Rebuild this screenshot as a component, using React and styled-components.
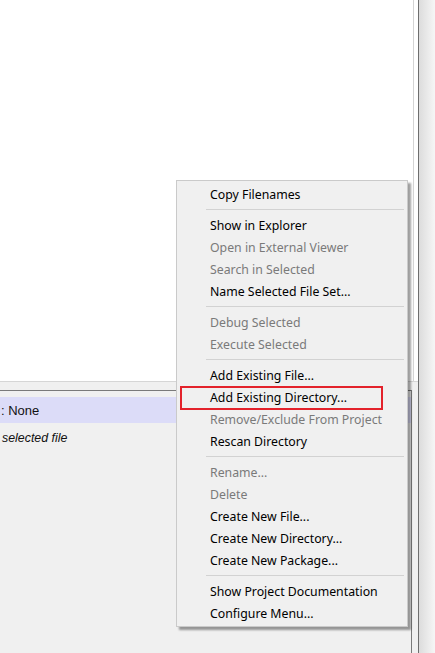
import React from 'react';
import styled, { createGlobalStyle } from 'styled-components';

const GlobalStyle = createGlobalStyle`
    html, body {
        margin: 0;
        padding: 0;
        width: 435px;
        height: 653px;
        overflow: hidden;
        background: #f0f0f0;
    }
    #root {
        height: 100%;
    }
`

const Window = styled.div`
    position: relative;
    display: flex;
    width: 435px;
    height: 653px;
    font-family: "Liberation Sans", Arial, sans-serif;
`

const LeftPane = styled.div`
    display: flex;
    flex-direction: column;
    width: 418px;
`

const TopView = styled.div`
    height: 381px;
    background: #fff;
    border-bottom: 1px solid #d6d6d6;
    display: flex;
`

const Canvas = styled.div`
    width: 413px;
    border-right: 1px solid #d4d4d4;
`

const BottomArea = styled.div`
    flex: 1;
    padding-top: 8px;
    display: flex;
`

const InfoPanel = styled.div`
    width: 411px;
    border-top: 1px solid #7a7a7a;
    border-right: 1px solid #7a7a7a;
    padding-top: 6px;
    background: #f0f0f0;
`

const StatusRow = styled.div`
    height: ${p => (p.$italic ? '30px' : '26px')};
    display: flex;
    align-items: center;
    padding-left: ${p => (p.$italic ? '2px' : '1px')};
    background: ${p => (p.$active ? '#dcdcf8' : 'transparent')};
    font-style: ${p => (p.$italic ? 'italic' : 'normal')};
    font-size: ${p => (p.$italic ? '12.4px' : '13px')};
    color: #111;
    white-space: nowrap;
`

const RightPane = styled.div`
    flex: 1;
    border-left: 1px solid #6e6e6e;
    background: linear-gradient(to right, #dcdcdc, #f6f6f6);
`

const Menu = styled.div`
    position: absolute;
    left: 176px;
    top: 180px;
    width: 230px;
    padding: 2px 0 2px;
    background: #f0f0f0;
    border: 1px solid #cacaca;
    box-shadow: 3px 3px 2px rgba(0, 0, 0, 0.38);
    font-family: "Noto Sans", "Open Sans", sans-serif;
    font-size: 12.3px;
`

const Item = styled.div`
    position: relative;
    height: 22px;
    display: flex;
    align-items: center;
    padding-left: 33px;
    color: ${p => (p.$disabled ? '#7a7a7a' : '#000')};
    white-space: nowrap;

    ${p => p.$marked && `
        &::after {
            content: '';
            position: absolute;
            left: 3px;
            top: 0;
            width: 199px;
            height: 20px;
            border: 2px solid #e3222b;
        }
    `}
`

const Separator = styled.div`
    height: 1px;
    margin: 4px 3px 4px 29px;
    background: #d2d2d2;
`

const groups = [
    [{ label: 'Copy Filenames' }],
    [
        { label: 'Show in Explorer' },
        { label: 'Open in External Viewer', disabled: true },
        { label: 'Search in Selected', disabled: true },
        { label: 'Name Selected File Set...' },
    ],
    [
        { label: 'Debug Selected', disabled: true },
        { label: 'Execute Selected', disabled: true },
    ],
    [
        { label: 'Add Existing File...' },
        { label: 'Add Existing Directory...', marked: true },
        { label: 'Remove/Exclude From Project', disabled: true },
        { label: 'Rescan Directory' },
    ],
    [
        { label: 'Rename...', disabled: true },
        { label: 'Delete', disabled: true },
        { label: 'Create New File...' },
        { label: 'Create New Directory...' },
        { label: 'Create New Package...' },
    ],
    [
        { label: 'Show Project Documentation' },
        { label: 'Configure Menu...' },
    ],
]

const App = () => {
    return (
        <Window>
            <GlobalStyle />
            <LeftPane>
                <TopView>
                    <Canvas />
                </TopView>
                <BottomArea>
                    <InfoPanel>
                        <StatusRow $active>: None</StatusRow>
                        <StatusRow $italic>selected file</StatusRow>
                    </InfoPanel>
                </BottomArea>
            </LeftPane>
            <RightPane />
            <Menu>
                {groups.map((group, gi) => (
                    <React.Fragment key={gi}>
                        {gi > 0 && <Separator />}
                        {group.map(item => (
                            <Item key={item.label} $disabled={item.disabled} $marked={item.marked}>
                                {item.label}
                            </Item>
                        ))}
                    </React.Fragment>
                ))}
            </Menu>
        </Window>
    )
}

export default App;
